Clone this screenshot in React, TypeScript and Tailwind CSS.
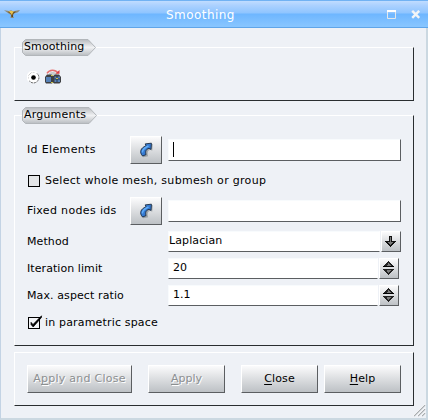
import type { ReactNode } from 'react';

function Label({ children, className = '' }: { children: ReactNode; className?: string }) {
  return <span className={`block whitespace-pre leading-[14px] ${className}`}>{children}</span>;
}

function Badge({ width, text, spacing }: { width: number; text: string; spacing: string }) {
  const w = width;
  return (
    <div className="relative h-[17px]" style={{ width: w }}>
      <svg className="absolute inset-0" width={w} height="17" viewBox={`0 0 ${w} 17`}>
        <defs>
          <linearGradient id={`badge-${text}`} x1="0" y1="0" x2="0" y2="1">
            <stop offset="0" stopColor="#b8bbbf" />
            <stop offset="0.5" stopColor="#f0f1f3" />
            <stop offset="1" stopColor="#b9bdc1" />
          </linearGradient>
        </defs>
        <path d={`M3.5 .5H${w - 8}L${w - 0.5} 8.5L${w - 8} 16.5H3.5L.5 13.5V3.5Z`} fill={`url(#badge-${text})`} stroke="#b2b6ba" />
      </svg>
      <Label className={`relative pl-[2px] pt-px ${spacing}`}>{text}</Label>
    </div>
  );
}

function Group({ className, children }: { className: string; children: ReactNode }) {
  return (
    <section className={`w-[400px] shrink-0 border border-t-white border-l-white border-r-[#292d30] border-b-[#292d30] ${className}`}>
      {children}
    </section>
  );
}

const raised = 'border border-t-white border-l-white border-r-[#5b5e61] border-b-[#5b5e61] bg-linear-to-b from-[#fbfbfc] to-[#bdc1c5]';
const sunken = 'border border-t-[#f8fbfd] border-l-[#f8fbfd] border-b-[#5b5e61] bg-white';

function PickButton() {
  return (
    <button className={`flex h-7 w-8 items-center justify-center ${raised}`}>
      <svg width="16" height="18" viewBox="0 0 16 18">
        <path d="M4.5 15.5C1.5 12 2 7 8 5L7 2.6L14 2.2L13.4 9L11.5 8C8.3 9 8.6 12 9.3 14.5Z" fill="#5c636b" opacity=".45" transform="translate(.8 .8)" />
        <path d="M4.6 15C1.2 11.5 2.3 6.8 8 4.9L7.2 2.9L13.4 2.2L13 8.4L11 7.3C7.6 8.2 7.2 10.8 8 13.6Z" fill="#3579d0" stroke="#1a2c44" strokeWidth=".9" />
        <path d="M4.4 11.5C4.2 8.5 6.8 6.6 10.5 5" fill="none" stroke="#62adf7" strokeWidth="1.5" />
      </svg>
    </button>
  );
}

function CheckBox({ checked = false }: { checked?: boolean }) {
  return (
    <svg className="block shrink-0 overflow-visible" width="12" height="12" viewBox="0 0 12 12">
      <rect x=".5" y=".5" width="11" height="11" fill={checked ? '#f2f4f7' : '#e3e5e7'} stroke="#000" />
      {checked && <path d="M3 5.3L5 7.5L13.5 -1.2V.4L5.2 10L3 7.5Z" fill="#000" stroke="#000" strokeWidth=".7" />}
    </svg>
  );
}

function SpinRow({ label, value, labelSpacing }: { label: string; value: string; labelSpacing: string }) {
  return (
    <div className="flex h-[21px]">
      <Label className={`w-[141px] pt-[4px] ${labelSpacing}`}>{label}</Label>
      <div className={`h-[21px] w-[210px] pl-1 pt-[2px] ${sunken} border-r-white`}>
        <Label>{value}</Label>
      </div>
      <div className={`ml-px h-[21px] w-5 ${raised}`}>
        <svg width="18" height="19" viewBox="0 0 18 19" shapeRendering="crispEdges">
          <path d="M3 8h11v-1h-1v-1h-1v-1h-1v-1h-1v-1h-1v-1h-1v1h-1v1h-1v1h-1v1h-1v1h-1z" fill="#222" />
          <path d="M3 7h11v1h-11zM3 10h11v1h-11z" fill="#000" />
          <path d="M8 4h1v1h1v1h1v1h-4v-1h1z" fill="#7a7a7a" />
          <path d="M3 10h11v1h-1v1h-1v1h-1v1h-1v1h-1v1h-1v-1h-1v-1h-1v-1h-1v-1h-1v-1h-1z" fill="#222" />
          <path d="M7 11h4v1h-1v1h-1v1h-1v-1h-1z" fill="#7a7a7a" />
        </svg>
      </div>
    </div>
  );
}

function ActionButton({ className, children, disabled = false }: { className: string; children: ReactNode; disabled?: boolean }) {
  return (
    <button className={`flex h-7 shrink-0 justify-center pt-[6px] ${raised} ${disabled ? 'text-[#8c8f91] [text-shadow:1px_1px_0_#fff]' : 'text-black'} ${className}`}>
      <Label>{children}</Label>
    </button>
  );
}

function Key({ children }: { children: ReactNode }) {
  return <span className="underline decoration-1 underline-offset-[2px]">{children}</span>;
}

function TitleBar() {
  return (
    <header className="relative flex h-7 shrink-0 items-start border-t border-b border-t-[#71b2f3] border-b-[#5fa5e9] bg-[linear-gradient(#c0dcff_0px,#a9d0ff_5px,#8fc5ff_12px,#6eb6ff_13px,#87c5ff_25px)]">
      <svg className="ml-1 mt-[9px]" width="16" height="9" viewBox="0 0 16 9">
        <path d="M0 .3L5 1L7 .2L9 1.2L16 .1L14 2.2L10 3.5L9 6L10 8H6.5L7 5L4 3Z" fill="#8f8874" />
        <path d="M4 2L7 1.2L10 2L12 1.5L9 4L9 7H7.5L7 4Z" fill="#5c431c" />
        <path d="M4.5 1.5L7 .8L10 1.6L8.5 3.6L8 5.5L7 3.5Z" fill="#eac34d" />
      </svg>
      <span className="ml-[146px] mt-[6px] whitespace-pre text-[12px] leading-[17px] tracking-[0.45px] text-white">Smoothing</span>
      <svg className="ml-auto mr-[7px] mt-[9px]" width="34" height="9" viewBox="0 0 34 9">
        <path d="M.5 8.5V1H8.5V8.5Z" fill="none" stroke="#e3e7ea" />
        <path d="M0 1H9" stroke="#fff" strokeWidth="2" />
        <path d="M25.2 .8L32.2 7.8M32.2 .8L25.2 7.8" stroke="#f3f5f7" strokeWidth="2.4" />
      </svg>
    </header>
  );
}

export default function App() {
  return (
    <main className="flex h-[420px] w-[428px] flex-col overflow-hidden bg-[#eef1f6] font-['DejaVu_Sans','Noto_Sans',sans-serif] text-[11px] text-black">
      <TitleBar />
      <div className="relative flex flex-1 flex-col border-r-2 border-b-2 border-l border-r-[#cbd8e1] border-b-[#cbd8e1] border-l-[#c3d3e4] pl-[13px] pt-[19px]">
        <Group className="h-[54px]">
          <div className="-mt-[9px] ml-[7px]"><Badge width={74} text="Smoothing" spacing="tracking-[0.1px]" /></div>
          <div className="ml-[12px] mt-[13px] flex items-start">
            <svg className="mt-[2px]" width="13" height="13" viewBox="0 0 13 13">
              <circle cx="6.5" cy="6.5" r="5.4" fill="#fff" stroke="#555" strokeWidth="1" strokeDasharray="2 1" />
              <path d="M2.2 10A5.4 5.4 0 0 1 10 2.2" fill="none" stroke="#fff" strokeWidth="1.8" />
              <circle cx="6.5" cy="6.5" r="2.3" fill="#000" />
            </svg>
            <svg className="ml-[5px]" width="17" height="16" viewBox="0 0 17 16">
              <path d="M4 4.5C6 2.5 10 2.5 12 5V6H4Z" fill="#c9cccd" />
              <path d="M2 4.3C4.5 0 10.5 .3 13 4" fill="none" stroke="#e66f70" strokeWidth="1.5" />
              <path d="M10.5 4.7H14.5V1Z" fill="#d83e42" />
              <path d="M0 8L2 5.5H6.5L8 7L10 5.5H14L16 8V13L14.5 14.5H9L8 13.5L7 14.5H1L0 13Z" fill="#3e4043" />
              <path d="M1 8H6V13H1ZM9.5 7.5H15V13H9.5Z" fill="#5681b7" />
              <path d="M12 7V13M9.5 10H15" stroke="#26344a" />
              <path d="M6 6H8V7H6ZM11 9H13V10H11ZM6 13H8V14H6Z" fill="#cac24d" />
            </svg>
          </div>
        </Group>

        <Group className="mt-[14px] h-[231px]">
          <div className="-mt-[9px] ml-[7px]"><Badge width={75} text="Arguments" spacing="tracking-[0.2px]" /></div>
          <div className="ml-[12px] mt-[12px]">
            <div className="flex h-7">
              <Label className="w-[103px] pt-[7px] tracking-[0.35px]">Id Elements</Label>
              <PickButton />
              <div className={`ml-[6px] mt-[3px] h-[22px] w-[233px] pl-1 pt-[2px] ${sunken} border-r-[#5b5e61]`}>
                <div className="h-[15px] w-px bg-black" />
              </div>
            </div>
            <div className="ml-px mt-[11px] flex h-3 items-start">
              <CheckBox />
              <Label className="-mt-px ml-[5px] tracking-[0.3px]">Select whole mesh, submesh or group</Label>
            </div>
            <div className="mt-[10px] flex h-7">
              <Label className="w-[103px] pt-[7px] tracking-[0.35px]">Fixed nodes ids</Label>
              <PickButton />
              <div className={`ml-[6px] mt-[3px] h-[22px] w-[233px] ${sunken} border-r-[#5b5e61]`} />
            </div>
            <div className="mt-[6px] flex h-[21px]">
              <Label className="w-[141px] pt-[4px] tracking-[0.1px]">Method</Label>
              <div className={`h-[21px] w-[212px] pt-[2px] ${sunken} border-r-white`}><Label className="tracking-[0.1px]">Laplacian</Label></div>
              <div className={`ml-px h-[21px] w-5 ${raised}`}>
                <svg width="18" height="19" viewBox="0 0 18 19" shapeRendering="crispEdges">
                  <path d="M7 4h3v5h4v1h-1v1h-1v1h-1v1h-1v1h-1v1h-1v-1h-1v-1h-1v-1h-1v-1h-1v-1h-1v-1h4z" fill="#111" />
                  <path d="M8 5h1v5h2v1h-1v1h-1v1h-1v-1h-1v-1h-1v-1h2z" fill="#777" />
                </svg>
              </div>
            </div>
            <div className="mt-[6px]"><SpinRow label="Iteration limit" value="20" labelSpacing="tracking-[0.07px]" /></div>
            <div className="mt-[6px]"><SpinRow label="Max. aspect ratio" value="1.1" labelSpacing="tracking-[0.1px]" /></div>
            <div className="ml-px mt-[11px] flex h-3 items-start">
              <CheckBox checked />
              <Label className="-mt-px ml-[5px] tracking-[0.17px]">in parametric space</Label>
            </div>
          </div>
        </Group>

        <Group className="mt-[6px] flex h-[54px] pl-[12px] pt-[12px]">
          <ActionButton className="w-[105px] tracking-[0.25px]" disabled>A<Key>p</Key>ply and Close</ActionButton>
          <ActionButton className="ml-4 w-[77px]" disabled><Key>A</Key>pply</ActionButton>
          <ActionButton className="ml-4 w-[77px] tracking-[0.15px]"><Key>C</Key>lose</ActionButton>
          <ActionButton className="ml-[6px] w-[77px] tracking-[0.1px]"><Key>H</Key>elp</ActionButton>
        </Group>

        <svg className="absolute right-0 bottom-px" width="13" height="13" viewBox="0 0 13 13">
          <path d="M1 12L12 1M5 12L12 5M9 12L12 9" stroke="#a9adb0" strokeWidth="1.4" />
          <path d="M0 12L12 0M4 12L12 4M8 12L12 8" stroke="#fff" strokeWidth=".7" />
        </svg>
      </div>
    </main>
  );
}
